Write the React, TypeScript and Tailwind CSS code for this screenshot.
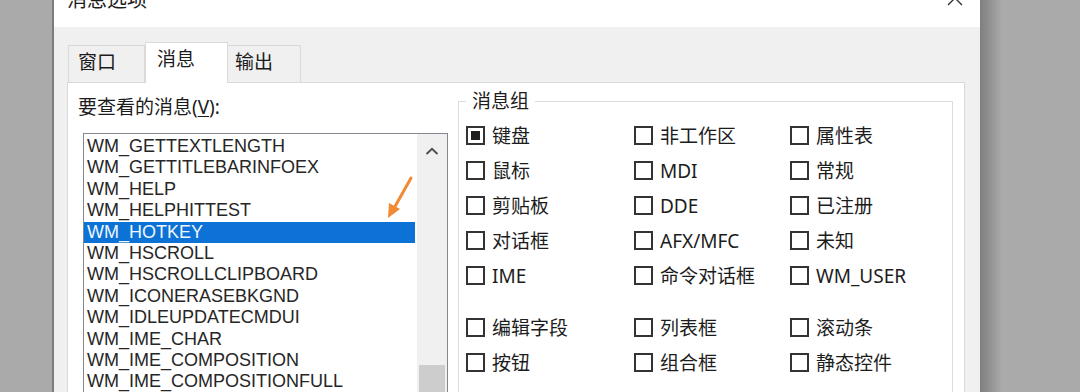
import { Fragment } from 'react';

const MESSAGES = [
  'WM_GETTEXTLENGTH',
  'WM_GETTITLEBARINFOEX',
  'WM_HELP',
  'WM_HELPHITTEST',
  'WM_HOTKEY',
  'WM_HSCROLL',
  'WM_HSCROLLCLIPBOARD',
  'WM_ICONERASEBKGND',
  'WM_IDLEUPDATECMDUI',
  'WM_IME_CHAR',
  'WM_IME_COMPOSITION',
  'WM_IME_COMPOSITIONFULL',
  'WM_IME_CONTROL',
  'WM_IME_ENDCOMPOSITION',
];

const SELECTED = 'WM_HOTKEY';

const GROUPS_TOP = [
  ['键盘', '非工作区', '属性表'],
  ['鼠标', 'MDI', '常规'],
  ['剪贴板', 'DDE', '已注册'],
  ['对话框', 'AFX/MFC', '未知'],
  ['IME', '命令对话框', 'WM_USER'],
];

const GROUPS_BOTTOM = [
  ['编辑字段', '列表框', '滚动条'],
  ['按钮', '组合框', '静态控件'],
];

const CHECKED = new Set(['键盘']);

function Check({ label }: { label: string }) {
  const on = CHECKED.has(label);
  return (
    <div className="flex items-center gap-[7px]">
      <span className="flex h-[19px] w-[19px] shrink-0 items-center justify-center border-2 border-[#333] bg-white">
        {on && <span className="h-[9px] w-[9px] bg-[#1e1e1e]" />}
      </span>
      <span className="text-[19px] leading-[24px] text-[#1c1c1c]">{label}</span>
    </div>
  );
}

function Grid({ rows, className }: { rows: string[][]; className?: string }) {
  return (
    <div className={`grid auto-rows-[35px] grid-cols-[168px_156px_1fr] ${className ?? ''}`}>
      {rows.map((r, i) => (
        <Fragment key={i}>
          {r.map((l) => (
            <Check key={l} label={l} />
          ))}
        </Fragment>
      ))}
    </div>
  );
}

export default function App() {
  return (
    <div className="flex h-[392px] w-[1080px] overflow-hidden bg-[#aaaaaa] font-['Noto_Sans','Noto_Sans_CJK_SC',sans-serif]">
      <div className="w-[54px] shrink-0 border-r-2 border-[#7c7c7c]" />

      <div className="flex w-[926px] shrink-0 flex-col bg-[#f0f0f0]">
        {/* title bar, mostly scrolled off the top */}
        <div className="flex h-[27px] shrink-0 justify-between bg-white pl-[13px] pr-[17px]">
          <span className="-mt-[12px] text-[20px] leading-[24px] text-[#1c1c1c]">消息选项</span>
          <svg width="16" height="16" viewBox="0 0 16 16" className="-mt-[10px]" aria-hidden="true">
            <path d="M1 1 L15 15 M15 1 L1 15" stroke="#333" strokeWidth="1.4" fill="none" />
          </svg>
        </div>

        <div className="flex flex-1 flex-col pl-[13px] pr-[15px] pt-[15px]">
          {/* tabs */}
          <div className="flex h-[40px] shrink-0 items-end pl-px text-[19px] leading-[24px] text-[#1c1c1c]">
            <div className="h-[37px] w-[77px] border-x border-t border-[#d9d9d9] bg-[#f0f0f0] pl-[9px] pt-[4px]">窗口</div>
            <div className="relative z-10 -mb-px h-[41px] w-[83px] border-x border-t border-[#d9d9d9] bg-white pl-[11px] pt-[4px]">
              消息
            </div>
            <div className="-ml-px h-[37px] w-[74px] border-x border-t border-[#d9d9d9] bg-[#f0f0f0] pl-[7px] pt-[4px]">输出</div>
          </div>

          {/* tab panel */}
          <div className="flex flex-1 border border-[#d9d9d9] bg-white">
            <div className="w-[380px] shrink-0 pl-[10px] pt-[12px]">
              <div className="text-[19px] leading-[24px] text-[#1c1c1c]">
                要查看的消息(<span className="underline underline-offset-2">V</span>):
              </div>
              <div className="relative ml-[5px] mt-[14px] flex h-[300px] w-[365px] border border-[#828790] bg-white">
                <div className="flex-1 pr-[2px] pt-[2px] font-['Liberation_Sans',Arial,sans-serif] text-[18px] leading-[21.4px]">
                  {MESSAGES.map((m) => (
                    <div
                      key={m}
                      className={
                        m === SELECTED
                          ? 'h-[21.4px] bg-[#0c72d5] pl-[3px] text-[#eef5ff]'
                          : 'h-[21.4px] pl-[3px] text-[#262626]'
                      }
                    >
                      {m}
                    </div>
                  ))}
                </div>
                <div className="flex w-[30px] shrink-0 flex-col bg-[#f0f0f0]">
                  <div className="flex h-[34px] items-center justify-center pb-[1px]">
                    <svg width="14" height="8" viewBox="0 0 14 8" aria-hidden="true">
                      <path d="M1.5 7 L7 1.8 L12.5 7" stroke="#505050" strokeWidth="2" fill="none" />
                    </svg>
                  </div>
                  <div className="h-[197px]" />
                  <div className="mx-[2px] h-[60px] bg-[#cdcdcd]" />
                </div>

                {/* orange annotation arrow */}
                <svg
                  width="34"
                  height="44"
                  viewBox="0 0 34 44"
                  className="absolute left-[300px] top-[41px]"
                  aria-hidden="true"
                >
                  <path d="M27 3 L9 35" stroke="#f08a35" strokeWidth="3" strokeLinecap="round" fill="none" />
                  <path d="M4 43 L5 28 L16 34 Z" fill="#f08a35" />
                </svg>
              </div>
            </div>

            <fieldset className="ml-[10px] mt-[6px] h-[400px] w-[495px] shrink-0 border border-[#dcdcdc] pl-[7px] pt-[5px]">
              <legend className="px-[6px] text-[19px] leading-[24px] text-[#1c1c1c]">消息组</legend>
              <Grid rows={GROUPS_TOP} />
              <Grid rows={GROUPS_BOTTOM} className="mt-[17px]" />
            </fieldset>
          </div>
        </div>
      </div>

      <div className="w-[22px] shrink-0 bg-gradient-to-r from-[#7f7f7f] to-[#aaaaaa]" />
    </div>
  );
}
